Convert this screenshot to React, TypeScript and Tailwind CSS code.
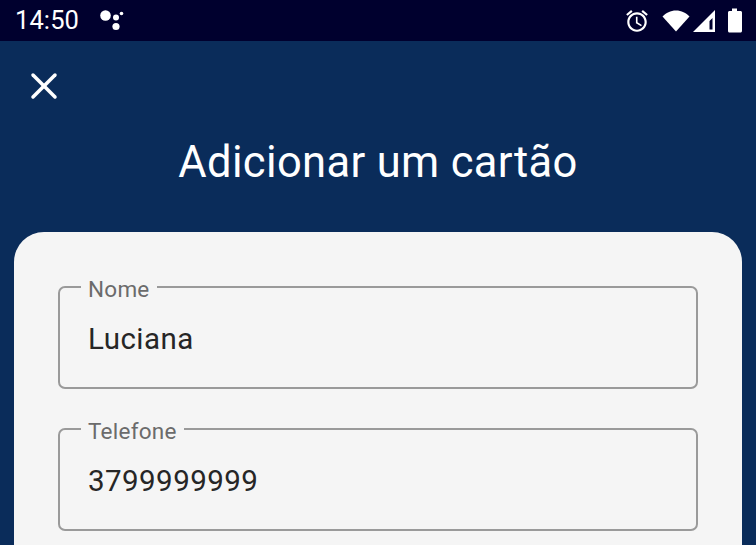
import React from "react";
import { X } from "lucide-react";

const font = { fontFamily: "Roboto, sans-serif" };

const Field = ({ label, value }: { label: string; value: string }) => (
  <fieldset className="h-[117px] rounded-[7px] border-2 border-[#9a9a9a] pl-[21px] pr-4 m-0 min-w-0">
    <legend className="px-[7px] pt-[4px] text-[22.5px] leading-[26px] tracking-[0.25px] text-[#6b6b6b]">
      {label}
    </legend>
    <div className="pt-[19px] pl-[7px] text-[29.5px] leading-[36px] tracking-[0.45px] text-[#262626]">
      {value}
    </div>
  </fieldset>
);

const StatusBar = () => (
  <div className="h-[41px] bg-[#00002e] flex items-center pl-[15px] pr-[13px] text-white">
    <span className="text-[25.5px] leading-none tracking-[0.1px] font-normal">14:50</span>
    <svg className="ml-[21px]" width="24" height="24" viewBox="0 0 24 24" fill="#fff">
      <circle cx="5.500" cy="6.500" r="5.300" />
      <circle cx="16" cy="8.500" r="3" />
      <circle cx="16" cy="17.500" r="3.600" />
      <circle cx="21.500" cy="4.500" r="1.800" />
    </svg>
    <div className="ml-auto flex items-center">
      <svg width="26" height="26" viewBox="0 0 24 24" fill="#fff">
        <path d="M22 5.720l-4.600-3.860-1.290 1.530 4.600 3.860L22 5.720zM7.880 3.390L6.600 1.860 2 5.710l1.290 1.530 4.590-3.850zM12.500 8H11v6l4.750 2.850.75-1.230-4-2.370V8zM12 4c-4.970 0-9 4.030-9 9s4.030 9 9 9 9-4.030 9-9-4.030-9-9-9zm0 16c-3.870 0-7-3.130-7-7s3.130-7 7-7 7 3.130 7 7-3.130 7-7 7z" />
      </svg>
      <svg className="ml-[12px]" width="28" height="22" viewBox="0 0 28 22" fill="#fff">
        <path d="M14 21.500 0.500 6.500C4 3 8.500 0.500 14 0.500s10 2.500 13.500 6z" />
      </svg>
      <svg className="ml-[2px]" width="24" height="24" viewBox="0 0 24 24" fill="#fff">
        <path fillRule="evenodd" d="M23 1v22H1L23 1zm-2.500 8-3 3V20.500h3V9z" />
      </svg>
      <svg className="ml-[11px]" width="16" height="25" viewBox="0 0 16 25" fill="#fff">
        <path d="M5 0.500h5V3h3.500c.8 0 1.500.7 1.500 1.500V23c0 .8-.7 1.500-1.500 1.500h-11C1.700 24.500 1 23.800 1 23V4.500C1 3.700 1.700 3 2.500 3H5V.5z" />
      </svg>
    </div>
  </div>
);

export default function App() {
  return (
    <div className="h-[545px] w-[756px] overflow-hidden bg-[#0a2c5a] flex flex-col" style={font}>
      <StatusBar />
      <div className="h-[191px] shrink-0 pl-[21.500px] pt-[22.500px]">
        <X className="text-white" size={44} strokeWidth={1.900} />
        <h1 className="mt-[30.500px] -ml-[21.500px] text-center text-[43.500px] leading-[50px] tracking-[0.35px] font-normal text-white">
          Adicionar um cartão
        </h1>
      </div>
      <div className="mx-[14px] flex-1 rounded-t-[30px] bg-[#f5f5f5] px-[44px] pt-[40px] flex flex-col gap-[25px]">
        <Field label="Nome" value="Luciana" />
        <Field label="Telefone" value="3799999999" />
      </div>
    </div>
  );
}
